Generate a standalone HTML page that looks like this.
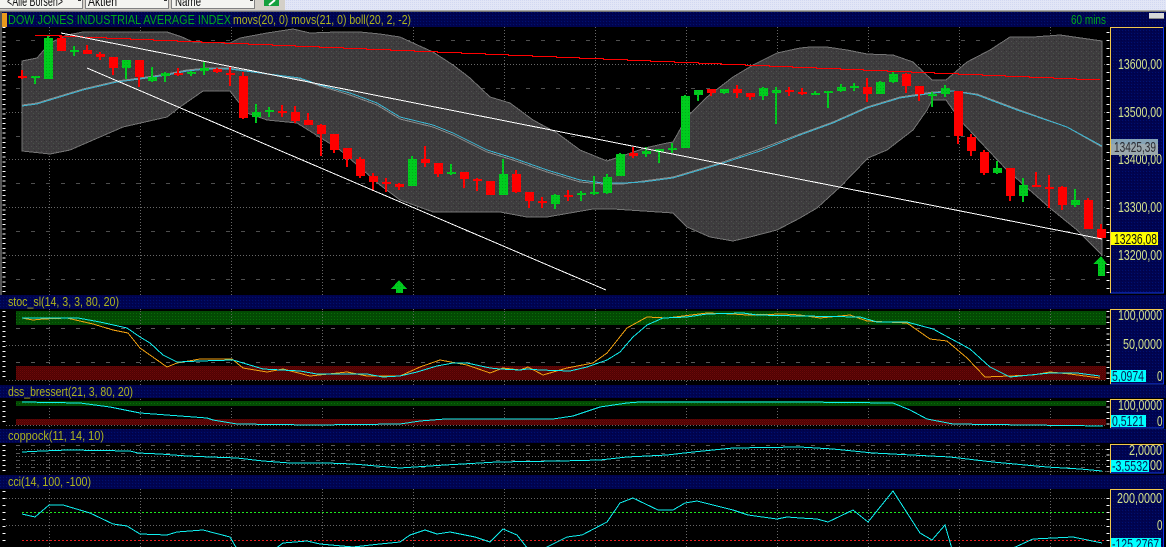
<!DOCTYPE html>
<html>
<head>
<meta charset="utf-8">
<style>
html,body{margin:0;padding:0;background:#000;overflow:hidden;width:1166px;height:547px}
svg{display:block}
text{font-family:"Liberation Sans",Arial,sans-serif}
.t{font-size:13px;fill:#aeb41c}
.a{font-size:14.5px;fill:#d4e28c}
.b{font-size:14.5px;fill:#0a1a50}
</style>
</head>
<body>
<svg width="1166" height="547" viewBox="0 0 1166 547" xmlns="http://www.w3.org/2000/svg">
<defs>
<pattern id="nv" width="3" height="3" patternUnits="userSpaceOnUse"><rect width="3" height="3" fill="#000450"/><rect x="0" y="0" width="1" height="1" fill="#001070"/><rect x="2" y="1" width="1" height="1" fill="#000048"/></pattern>
<pattern id="gz" width="3" height="3" patternUnits="userSpaceOnUse"><rect width="3" height="3" fill="#034a03"/><rect x="1" y="1" width="1" height="1" fill="#0a6a0a"/></pattern>
<pattern id="rz" width="2" height="2" patternUnits="userSpaceOnUse"><rect width="2" height="2" fill="#4e0404"/><rect x="0" y="0" width="1" height="1" fill="#6c0808"/><rect x="1" y="1" width="1" height="1" fill="#600404"/></pattern>
<pattern id="bd" width="5" height="5" patternUnits="userSpaceOnUse"><rect width="5" height="5" fill="#3e3c3e"/><rect x="1" y="1" width="1" height="1" fill="#505050"/><rect x="3" y="3" width="1" height="1" fill="#485448"/><rect x="4" y="0" width="1" height="1" fill="#303030"/></pattern>
<pattern id="gc" width="3" height="3" patternUnits="userSpaceOnUse"><rect width="3" height="3" fill="#00cc1e"/><rect x="1" y="1" width="1" height="1" fill="#00b018"/></pattern>
<pattern id="lv" width="2" height="2" patternUnits="userSpaceOnUse"><rect width="2" height="2" fill="#e2e6f6"/><rect width="1" height="1" fill="#d2d8f2"/></pattern>
</defs>

<!-- base -->
<rect width="1166" height="547" fill="#000"/>

<!-- top toolbar -->
<rect x="0" y="0" width="1166" height="10" fill="url(#lv)"/>
<rect x="0" y="0" width="285" height="10" fill="#d4d0c8"/>
<rect x="0" y="0" width="82" height="8" fill="#f4f4f0"/><rect x="0" y="8" width="83" height="1" fill="#808080"/><rect x="82" y="0" width="1" height="9" fill="#808080"/>
<rect x="85" y="0" width="83" height="8" fill="#f4f4f0"/><rect x="85" y="8" width="84" height="1" fill="#808080"/><rect x="85" y="0" width="1" height="9" fill="#808080"/><rect x="168" y="0" width="1" height="9" fill="#808080"/>
<rect x="171" y="0" width="83" height="8" fill="#f4f4f0"/><rect x="171" y="8" width="84" height="1" fill="#808080"/><rect x="171" y="0" width="1" height="9" fill="#808080"/><rect x="254" y="0" width="1" height="9" fill="#808080"/>
<rect x="78" y="0" width="3" height="1" fill="#333"/><rect x="164" y="0" width="3" height="1" fill="#333"/><rect x="250" y="0" width="3" height="1" fill="#333"/>
<text x="7" y="6" font-size="14" fill="#111" textLength="56" lengthAdjust="spacingAndGlyphs">&lt;Alle Börsen&gt;</text>
<text x="88" y="6" font-size="14" fill="#111" textLength="29" lengthAdjust="spacingAndGlyphs">Aktien</text>
<text x="175" y="6" font-size="14" fill="#111" textLength="26" lengthAdjust="spacingAndGlyphs">Name</text>
<rect x="264" y="0" width="15" height="6" fill="#14a03c"/>
<path d="M269 5L275 0" stroke="#fff" stroke-width="2" fill="none"/>
<rect x="0" y="10" width="1166" height="1" fill="#a8a8a8"/><rect x="0" y="11" width="1166" height="1" fill="#707070"/>

<!-- main grid -->
<g shape-rendering="crispEdges">
<g stroke="#686868" stroke-width="1" stroke-dasharray="1 2" fill="none">
<path d="M6 64.5H1106M6 112.5H1106M6 159.5H1106M6 207.5H1106M6 255.5H1106"/>
<path d="M49.5 27V547M140.5 27V547M231.5 27V547M322.5 27V547M413.5 27V547M504.5 27V547M595.5 27V547M686.5 27V547M777.5 27V547M868.5 27V547M959.5 27V547M1050.5 27V547"/>
</g>
<g stroke="#4e4e4e" stroke-width="1" stroke-dasharray="4 11" fill="none">
<path d="M16 40.5H1106M16 88.5H1106M16 136.5H1106M16 183.5H1106M16 231.5H1106M16 279.5H1106"/>
</g>
</g>

<!-- bollinger band -->
<polygon shape-rendering="crispEdges" fill="url(#bd)" stroke="#747474" stroke-width="1" points="22,61 37,58 50,43 67,35 83,32 117,32 140,32 167,32 182,37 193,42 230,43 240,38 267,33 293,29 310,33 337,32 360,32 380,34 400,37 413,43 433,52 453,65 470,78 490,97 510,103 533,120 557,133 580,150 607,161 625,155 645,148 667,143 673,142 687,117 707,97 733,77 753,65 777,53 800,48 810,47 827,47 847,50 867,54 893,55 913,62 932,80 946,80 967,62 990,50 1010,37 1033,37 1060,35 1102,41 1102,255 1077,230 1050,208 1007,170 988,150 960,120 946,100 932,100 927,110 913,130 887,150 868,158 840,187 817,208 800,218 777,230 750,237 733,241 710,237 687,227 673,213 613,209 593,209 547,217 527,217 500,212 433,212 400,200 380,185 340,150 337,148 297,123 267,120 247,113 230,91 203,91 180,107 167,117 123,127 100,137 70,150 50,154 22,151"/>

<!-- MA lines -->
<polyline shape-rendering="crispEdges" fill="none" stroke="#8a8a8a" stroke-width="1" points="22,105 37,103 50,99 83,89 117,81 140,78 167,74 187,70 207,68 230,68 253,72 300,79 320,86 350,95 377,105 400,119 433,127 453,135 487,152 513,160 547,172 580,182 603,184 623,184 643,181 673,177 720,163 760,149 800,134 833,122 867,107 900,97 933,92 953,91 977,94 1017,109 1067,127 1102,147"/>
<polyline shape-rendering="crispEdges" fill="none" stroke="#3cb4d0" stroke-width="1" points="22,106 37,104 50,100 83,90 117,82 140,79 167,75 187,71 207,69 230,69 253,72 300,78 320,85 350,93 377,103 400,117 433,125 453,133 487,150 513,158 547,170 580,180 603,183 623,183 643,182 673,178 720,164 760,151 800,135 833,123 867,108 900,98 933,93 953,91 977,95 1017,110 1067,127 1102,146"/>

<!-- red candles -->
<path shape-rendering="crispEdges" fill="#ff0000" d="
M21 70h2v9h-2zM18 76h9v2h-9z
M60 35h2v16h-2zM57 38h9v13h-9z
M86 45h2v9h-2zM83 50h9v4h-9z
M99 52h2v8h-2zM96 54h9v3h-9z
M112 57h2v18h-2zM109 57h9v11h-9z
M138 60h2v27h-2zM135 60h9v17h-9z
M177 68h2v8h-2zM174 73h9v2h-9z
M216 68h2v5h-2zM213 69h9v3h-9z
M229 67h2v19h-2zM226 73h9v2h-9z
M242 72h2v47h-2zM239 76h9v42h-9z
M281 105h2v12h-2zM278 111h9v2h-9z
M294 106h2v17h-2zM291 112h9v9h-9z
M307 113h2v12h-2zM304 120h9v5h-9z
M320 124h2v32h-2zM317 125h9v9h-9z
M333 134h2v19h-2zM330 134h9v16h-9z
M346 148h2v19h-2zM343 148h9v11h-9z
M359 157h2v21h-2zM356 159h9v17h-9z
M372 173h2v18h-2zM369 176h9v6h-9z
M385 178h2v14h-2zM382 182h9v2h-9z
M398 183h2v7h-2zM395 184h9v3h-9z
M424 146h2v21h-2zM421 159h9v4h-9z
M437 163h2v14h-2zM434 163h9v11h-9z
M463 172h2v16h-2zM460 172h9v7h-9z
M476 178h2v13h-2zM473 179h9v2h-9z
M486 181h9v14h-9z
M515 170h2v23h-2zM512 174h9v18h-9z
M528 192h2v16h-2zM525 192h9v9h-9z
M541 197h2v11h-2zM538 201h9v2h-9z
M567 190h2v11h-2zM564 195h9v2h-9z
M632 147h2v11h-2zM629 153h9v3h-9z
M710 89h2v7h-2zM707 89h9v4h-9z
M736 85h2v13h-2zM733 89h9v4h-9z
M749 93h2v7h-2zM746 93h9v4h-9z
M788 87h2v9h-2zM785 90h9v2h-9z
M801 88h2v7h-2zM798 92h9v2h-9z
M866 78h2v24h-2zM863 87h9v7h-9z
M905 73h2v20h-2zM902 74h9v12h-9z
M918 86h2v15h-2zM915 86h9v8h-9z
M957 91h2v53h-2zM954 91h9v45h-9z
M970 134h2v22h-2zM967 137h9v14h-9z
M983 150h2v25h-2zM980 152h9v21h-9z
M1009 168h2v33h-2zM1006 168h9v28h-9z
M1035 172h2v15h-2zM1032 185h9v2h-9z
M1048 175h2v33h-2zM1045 187h9v2h-9z
M1061 186h2v24h-2zM1058 187h9v18h-9z
M1087 198h2v31h-2zM1084 200h9v29h-9z
M1100 224h2v14h-2zM1097 229h9v9h-9z"/>

<!-- green candles -->
<path shape-rendering="crispEdges" fill="url(#gc)" d="
M34 76h2v8h-2zM31 76h9v2h-9z
M47 36h2v43h-2zM44 38h9v41h-9z
M73 46h2v10h-2zM70 50h9v2h-9z
M125 60h2v19h-2zM122 60h9v8h-9z
M151 67h2v15h-2zM148 77h9v4h-9z
M164 72h2v10h-2zM161 73h9v3h-9z
M190 71h2v5h-2zM187 72h9v2h-9z
M203 62h2v13h-2zM200 68h9v3h-9z
M255 104h2v19h-2zM252 112h9v5h-9z
M268 107h2v10h-2zM265 110h9v2h-9z
M411 156h2v30h-2zM408 159h9v27h-9z
M450 164h2v11h-2zM447 172h9v2h-9z
M502 159h2v36h-2zM499 174h9v21h-9z
M554 194h2v15h-2zM551 195h9v9h-9z
M580 191h2v10h-2zM577 193h9v2h-9z
M593 176h2v19h-2zM590 192h9v2h-9z
M606 174h2v20h-2zM603 177h9v16h-9z
M619 153h2v23h-2zM616 154h9v22h-9z
M645 147h2v10h-2zM642 151h9v3h-9z
M658 149h2v14h-2zM655 149h9v3h-9z
M671 143h2v10h-2zM668 148h9v2h-9z
M684 95h2v53h-2zM681 96h9v52h-9z
M697 90h2v11h-2zM694 90h9v5h-9z
M723 89h2v5h-2zM720 89h9v4h-9z
M762 87h2v13h-2zM759 88h9v8h-9z
M775 87h2v37h-2zM772 90h9v3h-9z
M814 91h2v4h-2zM811 93h9v2h-9z
M827 91h2v17h-2zM824 91h9v2h-9z
M840 84h2v8h-2zM837 87h9v4h-9z
M853 83h2v8h-2zM850 86h9v2h-9z
M879 81h2v13h-2zM876 82h9v12h-9z
M892 71h2v12h-2zM889 74h9v8h-9z
M931 92h2v15h-2zM928 94h9v2h-9z
M944 85h2v12h-2zM941 88h9v6h-9z
M996 161h2v13h-2zM993 168h9v5h-9z
M1022 178h2v24h-2zM1019 185h9v11h-9z
M1074 189h2v18h-2zM1071 200h9v5h-9z"/>

<!-- trend lines -->
<path shape-rendering="crispEdges" fill="#ff0000" d="M35 35h25v1h-25zM59 36h24v1h-24zM82 37h25v1h-25zM106 38h25v1h-25zM130 39h24v1h-24zM153 40h25v1h-25zM177 41h25v1h-25zM201 42h24v1h-24zM224 43h25v1h-25zM248 44h25v1h-25zM272 45h24v1h-24zM295 46h25v1h-25zM319 47h25v1h-25zM343 48h24v1h-24zM366 49h25v1h-25zM390 50h25v1h-25zM414 51h24v1h-24zM437 52h25v1h-25zM461 53h25v1h-25zM485 54h24v1h-24zM508 55h25v1h-25zM532 56h25v1h-25zM556 57h24v1h-24zM579 58h25v1h-25zM603 59h25v1h-25zM627 60h24v1h-24zM650 61h25v1h-25zM674 62h25v1h-25zM698 63h24v1h-24zM721 64h25v1h-25zM745 65h25v1h-25zM769 66h24v1h-24zM792 67h25v1h-25zM816 68h25v1h-25zM840 69h24v1h-24zM863 70h25v1h-25zM887 71h25v1h-25zM911 72h24v1h-24zM934 73h25v1h-25zM958 74h25v1h-25zM982 75h24v1h-24zM1005 76h25v1h-25zM1029 77h25v1h-25zM1053 78h24v1h-24zM1076 79h24v1h-24z"/>
<g shape-rendering="crispEdges" fill="none">
<path d="M61 33L1102 239" stroke="#ffffff" stroke-width="1"/>
<path d="M87 68L606 290" stroke="#ffffff" stroke-width="1"/>
</g>

<!-- arrows -->
<path fill="url(#gc)" shape-rendering="crispEdges" d="M399 280L407 289H403V293H396V289H391Z"/>
<path fill="url(#gc)" shape-rendering="crispEdges" d="M1101 256L1107 264H1105V276H1098V264H1093Z"/>

<!-- left margin & ticks main -->
<rect x="0" y="12" width="2" height="283" fill="#555"/>
<g stroke="#fff" fill="none" shape-rendering="crispEdges">
<path d="M4 27V292" stroke-width="3" stroke-dasharray="1 3.8"/>
<path d="M1108 32V292" stroke-width="3" stroke-dasharray="1 7"/>
<path d="M4 311V381" stroke-width="3" stroke-dasharray="1 4"/>
<path d="M1108 311V381" stroke-width="3" stroke-dasharray="1 4.6"/>
<path d="M4 401V426" stroke-width="3" stroke-dasharray="1 4"/>
<path d="M1108 401V426" stroke-width="3" stroke-dasharray="1 4.6"/>
<path d="M4 445V472" stroke-width="3" stroke-dasharray="1 4"/>
<path d="M1108 449V472" stroke-width="3" stroke-dasharray="1 4.6"/>
<path d="M4 491V547" stroke-width="3" stroke-dasharray="1 6"/>
<path d="M1108 498V547" stroke-width="3" stroke-dasharray="1 6"/>
</g>

<!-- header bars -->
<rect x="2" y="12" width="1164" height="15" fill="url(#nv)"/>
<rect x="2" y="13" width="5" height="14" fill="#e89a1c"/>
<rect x="1149" y="13" width="15" height="5" fill="#d8d8d8"/>
<rect x="1149" y="18" width="15" height="1" fill="#888"/>
<rect x="0" y="295" width="1166" height="14" fill="url(#nv)"/>
<rect x="0" y="385" width="1166" height="13" fill="url(#nv)"/>
<rect x="0" y="429" width="1166" height="14" fill="url(#nv)"/>
<rect x="0" y="475" width="1166" height="14" fill="url(#nv)"/>

<!-- zones panel 2 -->
<rect x="16" y="311" width="1090" height="14" fill="url(#gz)"/>
<rect x="16" y="366" width="1090" height="14" fill="url(#rz)"/>
<!-- zones panel 3 -->
<rect x="16" y="401" width="1090" height="5" fill="url(#gz)"/>
<rect x="16" y="419" width="1090" height="6" fill="url(#rz)"/>

<g shape-rendering="crispEdges" fill="none">
<!-- panel verticals re-drawn over zones -->
<g stroke="#5c6e5c" stroke-dasharray="1 2"><path d="M49.5 311V325M140.5 311V325M231.5 311V325M322.5 311V325M413.5 311V325M504.5 311V325M595.5 311V325M686.5 311V325M777.5 311V325M868.5 311V325M959.5 311V325M1050.5 311V325"/></g>
<g stroke="#666" stroke-dasharray="1 2">
<path d="M6 345.5H1106M6 380.5H1106M6 425.5H1106M16 449.5H1106M16 456.5H1106M16 464.5H1106M16 471.5H1106M6 498.5H1106M6 525.5H1106"/>
</g>
<g stroke="#5a5a5a" stroke-dasharray="4 11">
<path d="M16 328.5H1106M16 362.5H1106M16 445.5H1106M16 453.5H1106M16 460.5H1106M16 467.5H1106"/>
</g>
<path d="M22 512.5H1106" stroke="#1ee61e" stroke-dasharray="2 2"/>
<path d="M22 540.5H1106" stroke="#e61e1e" stroke-dasharray="2 2"/>

<!-- stochastic -->
<polyline stroke="#f0a010" points="22,318 33,320 43,319 67,318 93,324 113,330 128,333 140,348 167,367 177,363 200,359 232,359 243,368 267,372 283,369 310,376 347,372 367,376 400,376 420,367 440,360 467,365 490,373 503,368 520,370 528,367 543,375 567,368 593,363 607,353 627,328 647,317 667,318 707,313 733,314 747,315 783,314 800,315 820,318 850,315 867,321 907,323 930,339 947,341 967,358 985,377 1033,375 1050,372 1070,374 1100,378"/>
<polyline stroke="#10f0f0" points="22,318 78,318 100,322 127,328 140,337 150,343 163,355 177,362 200,361 233,360 263,369 300,371 317,374 367,374 383,377 400,376 417,372 437,366 453,363 467,363 490,368 500,369 520,370 527,369 540,370 570,371 587,367 607,360 620,352 633,337 647,325 663,318 687,317 707,314 743,313 757,315 800,316 860,317 877,322 907,322 933,329 970,349 990,367 1010,377 1050,373 1077,373 1100,376"/>
<!-- dss -->
<polyline stroke="#10f0f0" points="22,402 80,403 110,407 140,413 207,418 213,420 237,424 313,425 400,424 420,421 445,419 553,419 573,416 600,407 627,403 640,402 743,402 770,402 800,402 893,403 910,410 927,419 953,424 1103,426"/>
<!-- coppock -->
<polyline stroke="#10f0f0" points="22,452 42,451 68,450 130,451 138,453 160,454 187,456 210,457 237,458 263,461 290,463 327,463 353,464 400,468 445,465 497,462 560,461 600,460 627,457 667,455 693,452 733,448 800,447 833,449 873,453 950,457 993,462 1047,467 1080,469 1102,471"/>
<!-- cci -->
<polyline stroke="#10f0f0" points="22,514 35,517 49,505 63,505 90,513 113,524 127,526 140,534 167,535 177,532 203,530 230,537 237,549 275,549 283,543 307,541 320,544 353,547 380,544 400,542 410,535 425,530 437,534 450,532 475,537 490,542 503,529 517,535 528,549 543,549 567,537 582,535 607,522 620,503 633,498 658,510 673,510 685,503 697,501 733,510 748,515 777,519 787,517 800,518 817,519 828,522 853,510 868,522 893,491 920,533 932,540 945,525 952,549 1011,549 1033,539 1073,537 1102,543"/>
</g>

<!-- axis boxes -->
<g>
<rect x="1110.5" y="27.5" width="53" height="265" fill="url(#nv)"/>
<rect x="1110.5" y="309.5" width="53" height="74" fill="url(#nv)"/>
<rect x="1110.5" y="399.5" width="53" height="28" fill="url(#nv)"/>
<rect x="1110.5" y="444.5" width="53" height="28" fill="url(#nv)"/>
<rect x="1110.5" y="489.5" width="53" height="60" fill="url(#nv)"/>
</g>
<g fill="none" shape-rendering="crispEdges" stroke-width="1">
<path stroke="#1238e6" d="M1163.5 27V293H1110M1163.5 309V384H1110M1163.5 399V428H1110M1163.5 444V473H1110M1163.5 489V547"/>
<path stroke="#f2c84a" d="M1110.5 293V27.5H1163M1110.5 384V309.5H1163M1110.5 428V399.5H1163M1110.5 473V444.5H1163M1110.5 547V489.5H1163"/>
</g>

<!-- axis labels -->
<text class="a" x="1118" y="69" textLength="44" lengthAdjust="spacingAndGlyphs">13600,00</text>
<text class="a" x="1118" y="117" textLength="44" lengthAdjust="spacingAndGlyphs">13500,00</text>
<text class="a" x="1118" y="164" textLength="44" lengthAdjust="spacingAndGlyphs">13400,00</text>
<text class="a" x="1118" y="212" textLength="44" lengthAdjust="spacingAndGlyphs">13300,00</text>
<text class="a" x="1118" y="260" textLength="44" lengthAdjust="spacingAndGlyphs">13200,00</text>

<rect x="1111" y="139" width="47" height="16" fill="#9aa8ae"/>
<rect x="1111" y="139" width="47" height="5" fill="#86a4b6"/>
<text x="1114" y="152" font-size="14.5" fill="#2a2a30" textLength="42" lengthAdjust="spacingAndGlyphs">13425,39</text>

<rect x="1111" y="232" width="47" height="13" fill="#ffff00"/>
<text x="1114" y="244" font-size="14.5" fill="#101010" textLength="43" lengthAdjust="spacingAndGlyphs">13236,08</text>

<text class="a" x="1118" y="320" textLength="44" lengthAdjust="spacingAndGlyphs">100,0000</text>
<text class="a" x="1123" y="349" textLength="39" lengthAdjust="spacingAndGlyphs">50,0000</text>
<text class="a" x="1157" y="381" textLength="5.5" lengthAdjust="spacingAndGlyphs">0</text>
<rect x="1111" y="370" width="35" height="12" fill="#00ffff"/>
<text class="b" x="1112" y="381" textLength="32" lengthAdjust="spacingAndGlyphs">5,0974</text>

<text class="a" x="1118" y="410" textLength="44" lengthAdjust="spacingAndGlyphs">100,0000</text>
<text class="a" x="1157" y="426" textLength="5.5" lengthAdjust="spacingAndGlyphs">0</text>
<rect x="1111" y="415" width="35" height="12" fill="#00ffff"/>
<text class="b" x="1112" y="426" textLength="32" lengthAdjust="spacingAndGlyphs">0,5121</text>

<text class="a" x="1129" y="455" textLength="33" lengthAdjust="spacingAndGlyphs">2,0000</text>
<text class="a" x="1150" y="470" textLength="12" lengthAdjust="spacingAndGlyphs">00</text>
<rect x="1111" y="460" width="38" height="12" fill="#00ffff"/>
<text class="b" x="1112" y="471" textLength="36" lengthAdjust="spacingAndGlyphs">-3,5532</text>

<text class="a" x="1117" y="503" textLength="45" lengthAdjust="spacingAndGlyphs">200,0000</text>
<text class="a" x="1157" y="530" textLength="5.5" lengthAdjust="spacingAndGlyphs">0</text>
<rect x="1111" y="538" width="50" height="9" fill="#00ffff"/>
<text class="b" x="1112" y="549" textLength="47" lengthAdjust="spacingAndGlyphs">-125,2767</text>

<!-- header text -->
<text x="8" y="24" font-size="13" fill="#00a818" textLength="223" lengthAdjust="spacingAndGlyphs">DOW JONES INDUSTRIAL AVERAGE INDEX</text>
<text class="t" x="233" y="24" textLength="178" lengthAdjust="spacingAndGlyphs">movs(20, 0) movs(21, 0) boll(20, 2, -2)</text>
<text x="1071" y="24" font-size="13" fill="#00a818" textLength="35" lengthAdjust="spacingAndGlyphs">60 mins</text>

<text class="t" x="8" y="306" textLength="111" lengthAdjust="spacingAndGlyphs">stoc_sl(14, 3, 3, 80, 20)</text>
<text class="t" x="8" y="396" textLength="125" lengthAdjust="spacingAndGlyphs">dss_bressert(21, 3, 80, 20)</text>
<text class="t" x="8" y="440" textLength="96" lengthAdjust="spacingAndGlyphs">coppock(11, 14, 10)</text>
<text class="t" x="8" y="486" textLength="83" lengthAdjust="spacingAndGlyphs">cci(14, 100, -100)</text>
</svg>
</body>
</html>
